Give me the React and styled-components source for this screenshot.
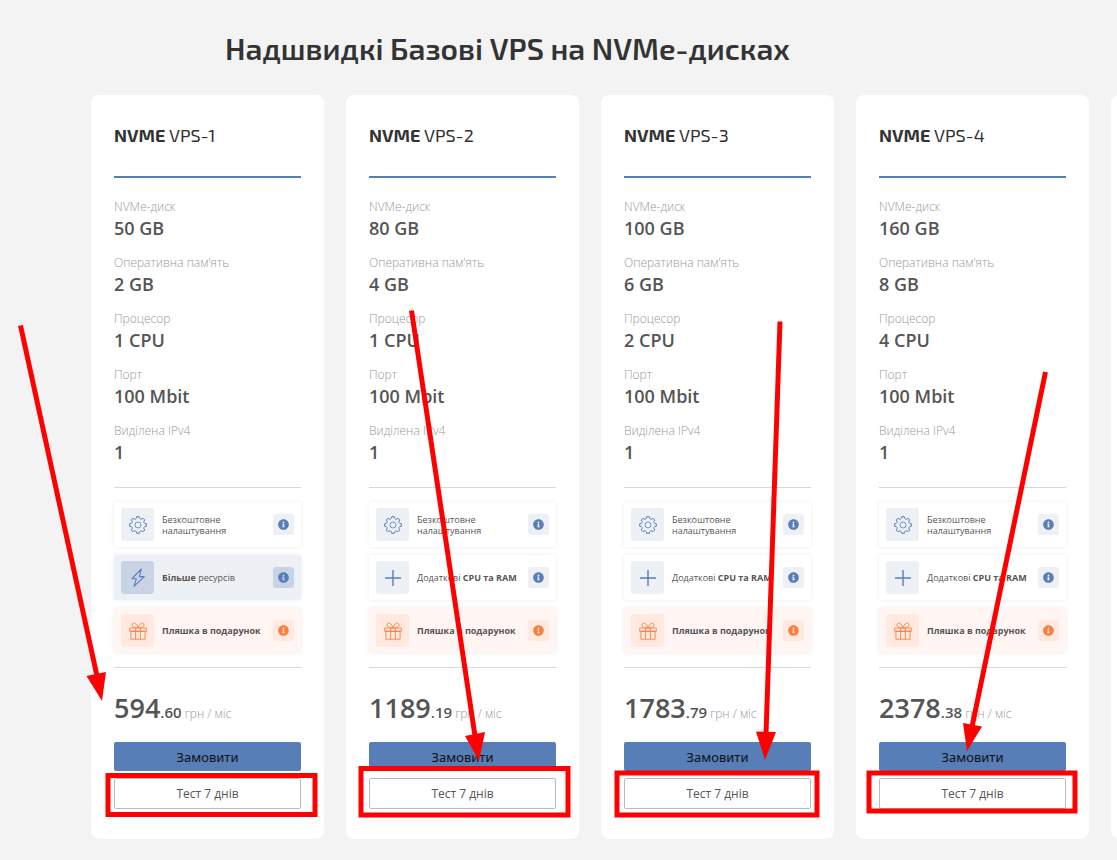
import React from 'react'
import styled, { createGlobalStyle } from 'styled-components'
import { FaInfoCircle } from 'react-icons/fa'

const GlobalStyle = createGlobalStyle`
  * {
    box-sizing: border-box;
  }
  body {
    margin: 0;
    background: #f3f3f3;
    color: #555;
    font-family: 'Open Sans', 'Noto Sans', sans-serif;
  }
`
const Page = styled.main`
  position: relative;
  min-height: 100vh;
  padding: 28px 0 21px;
  overflow: hidden;
`
const Heading = styled.h2`
  margin: 0;
  padding-right: 102px;
  color: #333;
  font-family: 'Exo 2', 'Open Sans', sans-serif;
  font-size: 30px;
  line-height: 40px;
  font-weight: 600;
  text-align: center;
`
const Slider = styled.div`
  display: flex;
  gap: 22px;
  padding: 27px 0 0 91px;
  overflow: hidden;
`
const Card = styled.article`
  flex: 0 0 233px;
  padding: 23px;
  padding-bottom: 30px;
  border-radius: 8px;
  background: #fff;
`
const Name = styled.h3`
  margin: 0 0 20px;
  padding: 5px 0 29px;
  border-bottom: 2px solid #577eb7;
  color: #333;
  font-family: 'Exo 2', 'Open Sans', sans-serif;
  font-size: 18px;
  line-height: 24px;
  font-weight: 400;

  strong {
    font-weight: 700;
  }
`
const Specs = styled.dl`
  display: grid;
  gap: 14px;
  margin: 0;
`
const Label = styled.dt`
  color: #999;
  font-size: 12px;
  line-height: 18px;
  font-weight: 300;
`
const Value = styled.dd`
  margin: 0;
  font-size: 18px;
  line-height: 24px;
  font-weight: 600;
`
const Features = styled.ul`
  display: grid;
  gap: 8px;
  margin: 23px 0 0;
  padding: 14px 0;
  border-top: 1px solid #d8d8d8;
  border-bottom: 1px solid #d8d8d8;
  list-style: none;
`

const tones = {
  plain: { back: '#fff', tile: '#edf1f6', ink: '#577eb7' },
  blue: { back: '#edf1f6', tile: '#c8d4e6', ink: '#577eb7' },
  orange: { back: '#fff6f3', tile: '#ffe9e0', ink: '#ff7d3c' }
}

const Feature = styled.li`
  display: flex;
  align-items: center;
  height: 45px;
  padding: 0 7px;
  border-radius: 2px;
  background: ${({ $tone }) => tones[$tone].back};
  box-shadow: 0 0 4px rgba(0, 0, 0, 0.08);
`
const IconTile = styled.span`
  display: flex;
  align-items: center;
  justify-content: center;
  width: 33px;
  height: 33px;
  border-radius: 3px;
  background: ${({ $tone }) => tones[$tone].tile};
  color: ${({ $tone }) => tones[$tone].ink};
`
const FeatureText = styled.span`
  flex: 1;
  padding-left: 8px;
  font-size: 9px;
  line-height: 11px;
  white-space: pre-line;
`
const InfoButton = styled.button`
  display: flex;
  align-items: center;
  justify-content: center;
  width: 21px;
  height: 21px;
  padding: 0;
  border: none;
  border-radius: 3px;
  background: ${({ $tone }) => tones[$tone].tile};
  color: ${({ $tone }) => tones[$tone].ink};
  cursor: pointer;
`
const Price = styled.p`
  margin: 0 0 10px;
  padding-top: 22px;
  font-size: 12px;
  line-height: 36px;
  font-weight: 300;
  color: #999;
  white-space: nowrap;
`
const Whole = styled.span`
  color: #555;
  font-size: 27px;
  font-weight: 600;
`
const Cents = styled.span`
  color: #555;
  font-size: 15px;
  font-weight: 600;
`
const Button = styled.button`
  display: block;
  width: 100%;
  height: 29px;
  padding: 0;
  border: none;
  border-radius: 2px;
  background: #577eb7;
  color: #111;
  font-family: 'Noto Sans', sans-serif;
  font-size: 13px;
  cursor: pointer;
`
const TestButton = styled(Button)`
  height: 31px;
  margin-top: 7px;
  border: 1px solid #bbb;
  background: #fff;
  color: #555;
  font-family: inherit;
  font-size: 12px;
`
const Marks = styled.svg`
  position: absolute;
  top: 0;
  left: 0;
  overflow: visible;
  pointer-events: none;
`

const polar = (deg, r) => {
  const a = deg * Math.PI / 180
  return `${(9 + r * Math.sin(a)).toFixed(2)} ${(9 - r * Math.cos(a)).toFixed(2)}`
}

// eight teeth with scalloped valleys between them
const gearPath = [0, 45, 90, 135, 180, 225, 270, 315].map((deg, i) => (
  `${i ? 'L' : 'M'}${polar(deg - 9, 8.4)} L${polar(deg + 9, 8.4)} L${polar(deg + 12, 7)} Q${polar(deg + 22.5, 6)} ${polar(deg + 33, 7)}`
)).join(' ') + ' Z'

const GearIcon = () => (
  <svg width='18' height='18' viewBox='0 0 18 18' fill='none' stroke='currentColor' strokeLinejoin='round'>
    <path d={gearPath} />
    <circle cx='9' cy='9' r='3' strokeWidth='0.8' />
  </svg>
)

const BoltIcon = () => (
  <svg width='18' height='20' viewBox='0 0 18 20' fill='none' stroke='currentColor' strokeWidth='1.1' strokeLinejoin='round'>
    <path d='M12.3 1 L3 10.7 H7.4 L5 18.4 L15.2 8.6 H10.4 Z' />
  </svg>
)

const PlusIcon = () => (
  <svg width='18' height='18' viewBox='0 0 18 18' stroke='currentColor' strokeWidth='1.4'>
    <path d='M9 1 V17 M1 9 H17' />
  </svg>
)

const GiftIcon = () => (
  <svg width='18' height='18' viewBox='0 0 18 18' fill='none' stroke='currentColor' strokeWidth='0.9' strokeLinejoin='round'>
    <path d='M0.7 6 H17.3 V9.3 H0.7 Z M1.9 9.3 H16.1 V17.2 H1.9 Z M6.6 6 V17 M11.4 6 V17' />
    <path d='M9 5.8 C5.5 5.9 3 4.9 3 2.9 C3 1.5 4.4 0.9 5.6 1.3 C7.2 1.8 8.4 3.6 9 5.8 C9.6 3.6 10.8 1.8 12.4 1.3 C13.6 0.9 15 1.5 15 2.9 C15 4.9 12.5 5.9 9 5.8 Z' />
  </svg>
)

const setup = { tone: 'plain', icon: <GearIcon />, text: 'Безкоштовне\nналаштування' }
const gift = { tone: 'orange', icon: <GiftIcon />, text: <strong>Пляшка в подарунок</strong> }
const more = { tone: 'blue', icon: <BoltIcon />, text: <><strong>Більше</strong> ресурсів</> }
const extra = { tone: 'plain', icon: <PlusIcon />, text: <>Додаткові <strong>CPU та RAM</strong></> }

const plans = [
  { id: 1, disk: 50, ram: 2, cpu: 1, price: ['594', '60'], features: [setup, more, gift] },
  { id: 2, disk: 80, ram: 4, cpu: 1, price: ['1189', '19'], features: [setup, extra, gift] },
  { id: 3, disk: 100, ram: 6, cpu: 2, price: ['1783', '79'], features: [setup, extra, gift] },
  { id: 4, disk: 160, ram: 8, cpu: 4, price: ['2378', '38'], features: [setup, extra, gift] }
]

const Spec = ({ label, children }) => (
  <div>
    <Label>{label}</Label>
    <Value>{children}</Value>
  </div>
)

const PlanCard = ({ plan }) => (
  <Card>
    <Name><strong>NVME</strong> VPS-{plan.id}</Name>
    <Specs>
      <Spec label='NVMe-диск'>{plan.disk} GB</Spec>
      <Spec label={'Оперативна пам\'ять'}>{plan.ram} GB</Spec>
      <Spec label='Процесор'>{plan.cpu} CPU</Spec>
      <Spec label='Порт'>100 Mbit</Spec>
      <Spec label='Виділена IPv4'>1</Spec>
    </Specs>
    <Features>
      {plan.features.map(({ tone, icon, text }, i) => (
        <Feature key={i} $tone={tone}>
          <IconTile $tone={tone}>{icon}</IconTile>
          <FeatureText>{text}</FeatureText>
          <InfoButton type='button' $tone={tone} aria-label='Детальніше'>
            <FaInfoCircle size={11} />
          </InfoButton>
        </Feature>
      ))}
    </Features>
    <Price>
      <Whole>{plan.price[0]}</Whole>
      <Cents>.{plan.price[1]}</Cents> грн / міс
    </Price>
    <Button type='button'>Замовити</Button>
    <TestButton type='button'>Тест 7 днів</TestButton>
  </Card>
)

const Annotations = () => (
  <Marks width='1' height='1' aria-hidden='true'>
    <g fill='none' stroke='#f00' strokeWidth='5'>
      <path d='M20.5 325.5 L97 676 M411.5 310.5 L475 736 M780 321.5 L766 734 M1045.5 372 L972 727' />
      <rect x='108' y='775.5' width='207' height='39' />
      <rect x='361' y='768.5' width='207' height='46.5' />
      <rect x='617' y='773' width='200' height='42' />
      <rect x='869' y='773' width='206' height='38' />
    </g>
    <path fill='#f00' d='M86.5 676 L106 672 L102 701 Z M465 736 L485 732 L479 761 Z M756 731.5 L776 732 L765 760 Z M963 723 L982 726.5 L967 751 Z' />
  </Marks>
)

export default function App() {
  return (
    <Page>
      <GlobalStyle />
      <Heading>Надшвидкі Базові VPS на NVMe-дисках</Heading>
      <Slider>
        {plans.map(plan => <PlanCard key={plan.id} plan={plan} />)}
        <Card />
      </Slider>
      <Annotations />
    </Page>
  )
}
